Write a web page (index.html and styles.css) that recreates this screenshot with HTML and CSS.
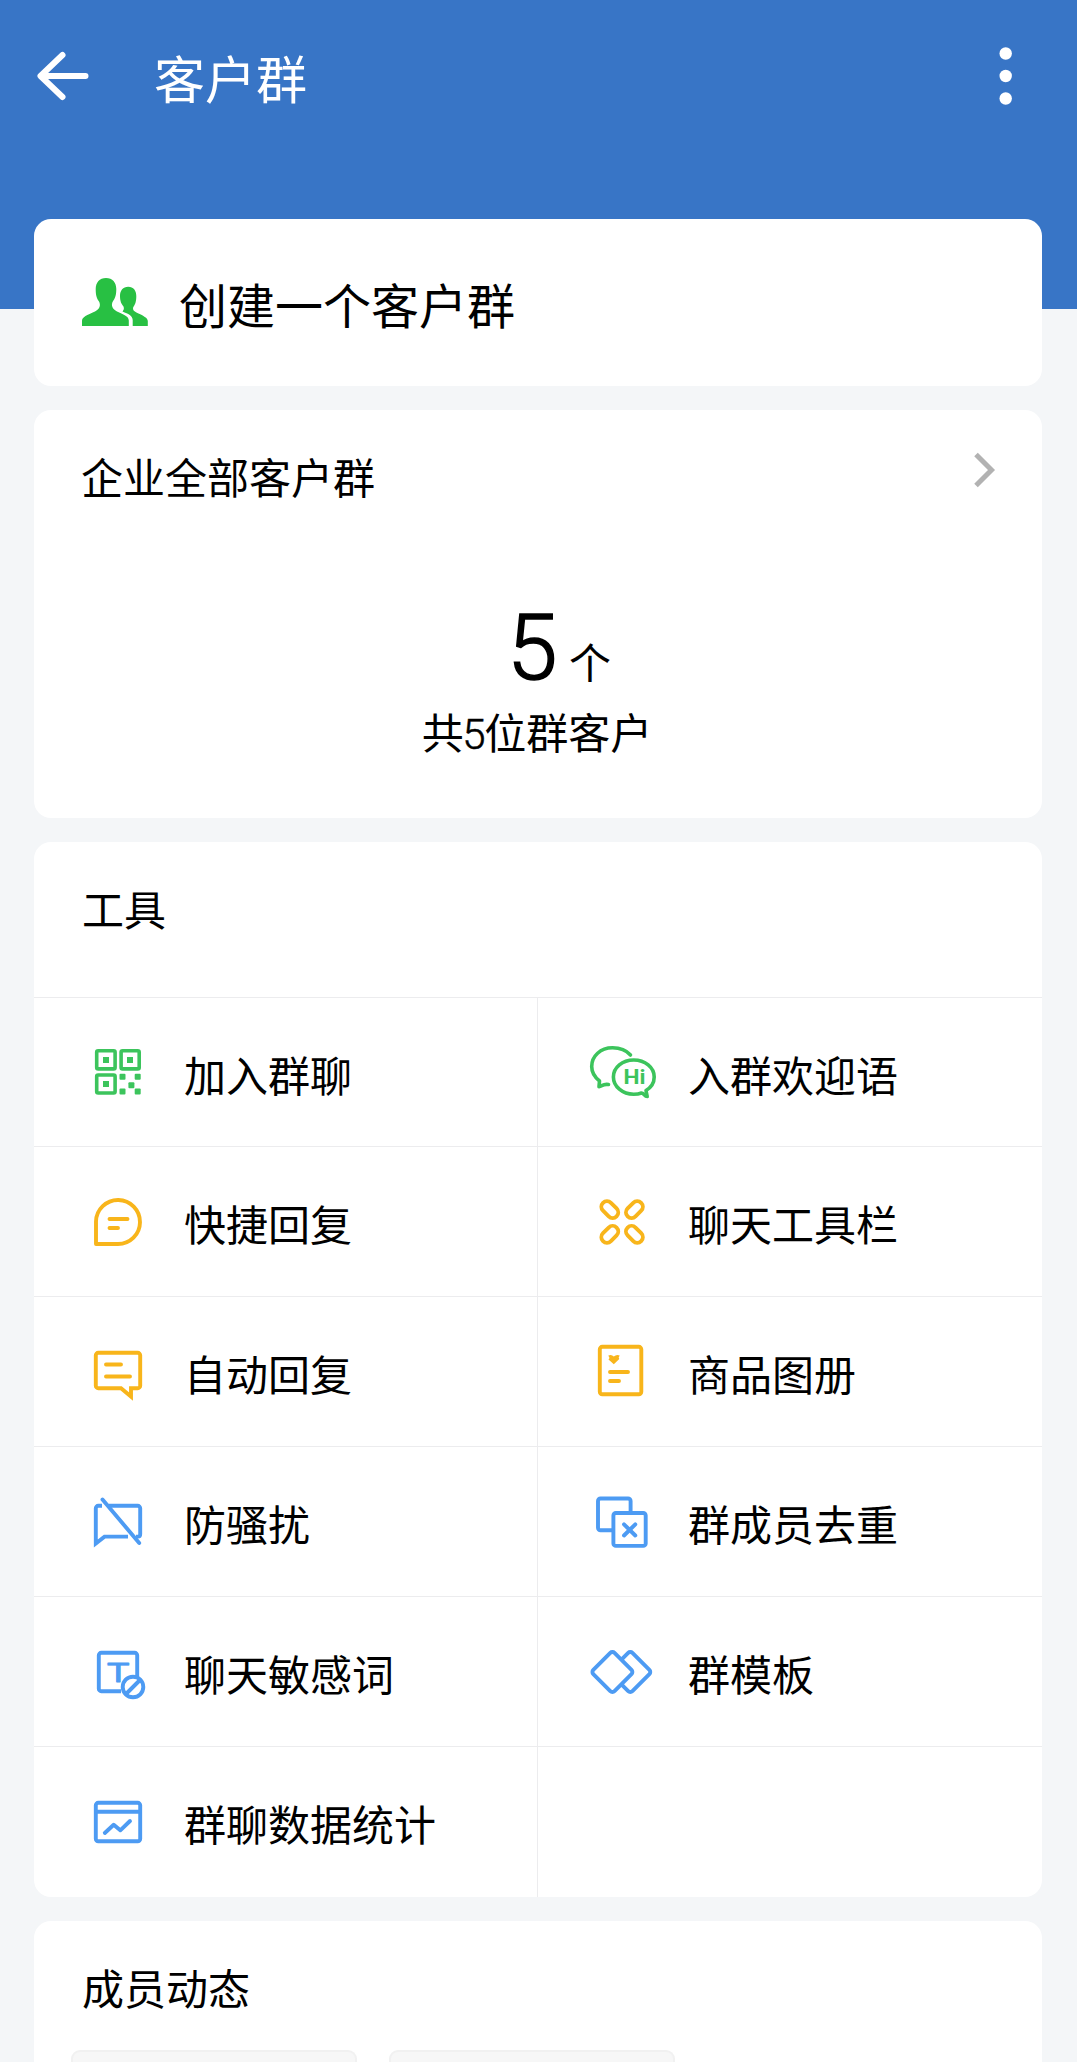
FILE: index.html
```html
<!DOCTYPE html>
<html lang="zh-CN">
<head>
<meta charset="utf-8">
<title>客户群</title>
<link rel="stylesheet" href="styles.css">
</head>
<body>
<header class="topbar">
  <svg class="back" viewBox="34 46 60 60"><path d="M62.5 55 40.500 76 62.5 97M41 76H85.500"/></svg>
  <h1 class="title">客户群</h1>
  <svg class="more" viewBox="996 46 20 60"><circle cx="1005.700" cy="53.500" r="6.200"/><circle cx="1005.700" cy="76" r="6.200"/><circle cx="1005.700" cy="98.500" r="6.200"/></svg>
</header>
<main class="content">
  <section class="card create">
    <svg class="people" viewBox="81 276 68 52">
      <path d="M106 278C99.500 278 95.700 282.500 95.700 289C95.700 295 96.500 298 99.300 302C100.800 306 99.500 309 95 311.500C87 315 82 317 82 321V326H128.800V320.500C128.800 316 123 314.500 117 311.500C112.500 309 111 306 112.500 302C115.300 298 116.300 295 116.300 289C116.300 282.500 112.500 278 106 278Z"/>
      <path d="M128.200 286.700C123 286.700 120 290.500 120 296C120 301.500 121.500 304 123.500 306.500C124.300 308.500 123.800 310 122.500 311.500C128.500 314 132.500 315.500 132.700 320V326H147.800V321C147.800 318 143 315.500 138.500 313.500C134 311.500 132.300 310 133.300 307C135.300 304 136.300 301.500 136.300 296C136.300 290.500 133.500 286.700 128.200 286.700Z"/>
    </svg>
    <span class="create-label">创建一个客户群</span>
  </section>

  <section class="card summary">
    <div class="summary-head">
      <h2 class="heading">企业全部客户群</h2>
      <svg class="chevron" viewBox="972 450 26 40"><path d="M976 454.500 991.500 470 976 485.500"/></svg>
    </div>
    <div class="count"><span class="count-number">5</span><span class="count-unit">个</span></div>
    <p class="count-note">共<span class="digit">5</span>位群客户</p>
  </section>

  <section class="card tools">
    <h2 class="heading tools-heading">工具</h2>
    <div class="tool-grid">
      <div class="tool">
        <svg class="icon green" viewBox="84 1038 68 68">
          <g><rect x="96.700" y="1050.700" width="18.400" height="18.200" rx="1.500"/><rect x="121.100" y="1050.700" width="18.100" height="18.200" rx="1.500"/><rect x="96.700" y="1075" width="18.400" height="18" rx="1.500"/></g>
          <g class="solid"><rect x="103" y="1057" width="6" height="6"/><rect x="127" y="1057" width="6" height="6"/><rect x="103" y="1081" width="6" height="6"/><rect x="119.500" y="1073.700" width="6" height="6" rx="1"/><rect x="134.700" y="1073.700" width="6" height="6" rx="1"/><rect x="128.400" y="1082.300" width="6" height="6" rx="1"/><rect x="119.500" y="1088.500" width="6" height="6" rx="1"/><rect x="134.700" y="1088.500" width="6" height="6" rx="1"/></g>
        </svg>
        <span>加入群聊</span>
      </div>
      <div class="tool">
        <svg class="icon green" viewBox="588 1038 68 68">
          <path d="M630.500 1055C626.500 1050.500 620 1047.800 612.500 1047.800C600.500 1047.800 591.700 1056 591.700 1066.500C591.700 1073 594.500 1077 599.500 1081L599 1086.700C602 1086.300 603 1083.500 608.500 1084.500"/>
          <path d="M633.700 1060C645 1060 654.200 1067.500 654.200 1077C654.200 1083 651 1087.500 646 1090.500L647.200 1096.500C644.500 1096.500 643.500 1092.800 641.500 1093C639 1094 636.500 1094.300 633.700 1094.300C622.500 1094.300 613.400 1086.500 613.400 1077C613.400 1067.500 622.500 1060 633.700 1060Z"/>
          <text class="hi" x="623.500" y="1084.300" textLength="22" lengthAdjust="spacingAndGlyphs">Hi</text>
        </svg>
        <span>入群欢迎语</span>
      </div>
      <div class="tool">
        <svg class="icon yellow" viewBox="84 1187 68 68"><path d="M96 1244V1221.500A22 22 0 1 1 118 1244Z M109.500 1219H127.500M109.500 1228H118"/></svg>
        <span>快捷回复</span>
      </div>
      <div class="tool">
        <svg class="icon yellow" viewBox="588 1187 68 68">
          <rect x="600.200" y="1204" width="19.200" height="11.200" rx="5.600" transform="rotate(45 609.800 1209.600)"/>
          <rect x="624.800" y="1204" width="19.200" height="11.200" rx="5.600" transform="rotate(-45 634.400 1209.600)"/>
          <rect x="600.200" y="1228.700" width="19.200" height="11.200" rx="5.600" transform="rotate(-45 609.800 1234.300)"/>
          <rect x="624.800" y="1228.700" width="19.200" height="11.200" rx="5.600" transform="rotate(45 634.400 1234.300)"/>
        </svg>
        <span>聊天工具栏</span>
      </div>
      <div class="tool">
        <svg class="icon yellow" viewBox="84 1337 68 68"><path class="miter" d="M98.300 1352.800H137.700A2.500 2.500 0 0 1 140.200 1355.300V1385.700A2.500 2.500 0 0 1 137.700 1388.200H131V1396.500L121 1388.200H98.300A2.500 2.500 0 0 1 95.800 1385.700V1355.300A2.500 2.500 0 0 1 98.300 1352.800Z"/><path d="M106 1364.500H121M106 1376.500H130"/></svg>
        <span>自动回复</span>
      </div>
      <div class="tool">
        <svg class="icon yellow" viewBox="588 1337 68 68"><rect x="599.800" y="1346.800" width="41.500" height="47.500" rx="2.500"/><path d="M610 1372H628M610 1381H619"/><path class="solid" d="M608.300 1355.500Q611.500 1354 613.800 1356.500Q616.500 1354 619.700 1355.500L618.700 1357.500L619.300 1359L613.800 1364.300L608.500 1359.500L609.500 1358Z"/></svg>
        <span>商品图册</span>
      </div>
      <div class="tool">
        <svg class="icon blue" viewBox="84 1487 68 68"><path class="miter butt" d="M102 1505.800H98.300A2.500 2.500 0 0 0 95.800 1508.300V1543.500L104.500 1536.600H128M108.500 1505.800H137.700A2.500 2.500 0 0 1 140.200 1508.300V1534Q140.200 1536.600 138 1536.600H136"/><path d="M102.500 1499.500 139.200 1543"/></svg>
        <span>防骚扰</span>
      </div>
      <div class="tool">
        <svg class="icon blue" viewBox="588 1487 68 68"><path d="M613 1530.300H600.500A2.500 2.500 0 0 1 598 1527.800V1501A2.500 2.500 0 0 1 600.500 1498.500H628.100A2.500 2.500 0 0 1 630.600 1501V1513"/><rect x="613.400" y="1513" width="32.300" height="32.900" rx="2.500"/><path d="M624 1524.300 635.300 1535.500M635.300 1524.300 624 1535.500"/></svg>
        <span>群成员去重</span>
      </div>
      <div class="tool">
        <svg class="icon blue" viewBox="84 1637 68 68"><path class="butt" d="M121 1691.200H101.300A2.500 2.500 0 0 1 98.800 1688.700V1655.300A2.500 2.500 0 0 1 101.300 1652.800H134.700A2.500 2.500 0 0 1 137.200 1655.300V1677"/><circle cx="133" cy="1687" r="10.300"/><path d="M127 1693 139 1681"/><text class="letter" x="107" y="1682" textLength="22.500" lengthAdjust="spacingAndGlyphs">T</text></svg>
        <span>聊天敏感词</span>
      </div>
      <div class="tool">
        <svg class="icon blue" viewBox="588 1637 68 68"><rect x="615.300" y="1657" width="30" height="30" rx="3" transform="rotate(45 630.300 1672)"/><rect class="masking" x="597.400" y="1657" width="30" height="30" rx="3" transform="rotate(45 612.400 1672)"/></svg>
        <span>群模板</span>
      </div>
      <div class="tool">
        <svg class="icon blue" viewBox="84 1787 68 68"><rect x="95.800" y="1802.800" width="44.400" height="38.500" rx="2.500"/><path d="M96 1811.700H140M104.800 1833 113.700 1824.700 120.300 1830.300 130 1821"/></svg>
        <span>群聊数据统计</span>
      </div>
      <div class="tool"></div>
    </div>
  </section>

  <section class="card activity">
    <h2 class="heading">成员动态</h2>
    <div class="activity-row"><div class="tile"></div><div class="tile"></div></div>
  </section>
</main>
</body>
</html>
```

FILE: styles.css
```css
* { box-sizing: border-box; margin: 0; padding: 0; }
body {
  height: 2062px;
  background: linear-gradient(#3875c6 309px, #f4f6f8 309px);
  color: #000;
  font-family: "Noto Sans CJK SC", sans-serif;
  font-size: 42px;
  line-height: 60px;
}
h1, h2 { font-weight: 400; }
svg { display: block; flex: none; overflow: visible; }

.topbar { display: flex; align-items: flex-start; height: 219px; padding: 46px 61px 0 34px; color: #fff; }
.back { width: 60px; height: 60px; fill: none; stroke: #fff; stroke-width: 6; stroke-linecap: round; stroke-linejoin: round; }
.title { flex: 1; padding-left: 60px; font-size: 51px; line-height: 62px; }
.more { width: 20px; height: 60px; fill: #fff; }

.content { display: flex; flex-direction: column; gap: 24px; padding: 0 35px 0 34px; }
.card { background: #fff; border-radius: 17px; overflow: hidden; }
.heading { font-size: 42px; line-height: 60px; }

.create { display: flex; align-items: flex-start; height: 167px; padding: 57px 47px 0; }
.people { width: 68px; height: 52px; fill: #28c043; }
.create-label { padding-left: 30px; font-size: 48px; line-height: 55px; }

.summary { height: 408px; padding-top: 36px; }
.summary-head { display: flex; justify-content: space-between; height: 135px; padding: 0 44px 0 47px; }
.chevron { width: 26px; height: 40px; margin-top: 4px; fill: none; stroke: #b2b2b2; stroke-width: 5; }
.count { display: flex; align-items: baseline; justify-content: center; height: 120px; padding-left: 42px; }
.count-number { width: 62px; font: 300 91px/134px Roboto, sans-serif; -webkit-text-stroke: 1.5px #000; }
.count-unit { font-size: 42px; }
.count-note { text-align: center; padding-right: 2px; }
.digit { font-family: Roboto, sans-serif; font-weight: 300; margin: 0 -1.5px; -webkit-text-stroke: .5px #000; }

.tools { height: 1055px; }
.tools-heading { height: 155px; padding: 36px 48px 0; }
.tool-grid { display: grid; grid-template-columns: 504px 504px; grid-template-rows: 149px repeat(4, 150px) 151px; }
.tool { display: flex; align-items: flex-start; gap: 32px; padding: 40px 0 0 50px; border-top: 1px solid #ececee; }
.tool:nth-child(odd) { border-right: 1px solid #ececee; }
.tool span { padding-top: 6px; white-space: nowrap; }

.icon { width: 68px; height: 68px; fill: none; stroke: currentColor; stroke-width: 3.9; stroke-linecap: round; stroke-linejoin: round; }
.green { color: #3cc45c; stroke-width: 3.6; }
.yellow { color: #f8b51b; }
.blue { color: #4d9bf3; }
.solid { fill: currentColor; stroke: none; }
.miter { stroke-linejoin: miter; }
.butt { stroke-linecap: butt; }
.masking { fill: #fff; }
.hi, .letter { fill: currentColor; stroke: none; }
.hi { font-family: Roboto, sans-serif; font-size: 21px; font-weight: 700; }
.letter { font-family: "Liberation Sans", sans-serif; font-size: 27px; stroke: currentColor; stroke-width: .8; }

.activity { height: 141px; padding: 36px 37px 0; border-radius: 17px 17px 0 0; }
.activity .heading { padding-left: 11px; }
.activity-row { display: flex; gap: 32px; margin-top: 33px; }
.tile { width: 286px; height: 12px; background: #f7f7f7; border: 2px solid #f1f1f1; border-bottom: 0; border-radius: 9px 9px 0 0; }
```
